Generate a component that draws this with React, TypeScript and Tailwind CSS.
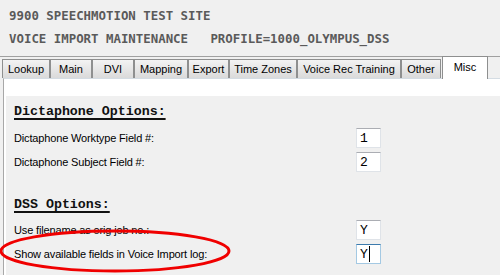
import React from "react";

const tabs = [
  { label: "Lookup", w: 48 },
  { label: "Main", w: 42 },
  { label: "DVI", w: 42 },
  { label: "Mapping", w: 54 },
  { label: "Export", w: 41 },
  { label: "Time Zones", w: 68 },
  { label: "Voice Rec Training", w: 104 },
  { label: "Other", w: 40 },
];

function Field({ value, focused }: { value: string; focused?: boolean }) {
  return (
    <div
      className={
        focused
          ? "w-[25px] h-[20px] bg-white border border-[#a4c9e3] border-t-[#3d7bad] flex items-center pl-[3px]"
          : "w-[25px] h-[20px] bg-white border border-[#dfe3e8] border-t-[#abadb3] flex items-center pl-[3px]"
      }
      style={{ fontFamily: '"Liberation Mono", "Courier New", monospace' }}
    >
      <span className="text-[13px] leading-[13px] text-black">{value}</span>
      {focused && <span className="w-px h-[16px] bg-black ml-[1px]" />}
    </div>
  );
}

function Row({ label, value, focused }: { label: string; value: string; focused?: boolean }) {
  return (
    <div className="flex items-center h-[20px]">
      <div className="w-[342px] text-[11px] tracking-[-0.15px] text-black leading-[14px]">{label}</div>
      <Field value={value} focused={focused} />
    </div>
  );
}

function Heading({ children }: { children: React.ReactNode }) {
  return (
    <div
      className="text-[13.3px] leading-[15px] font-bold text-[#111] underline underline-offset-[3px] decoration-[1.5px]"
      style={{ fontFamily: '"Liberation Mono", "Courier New", monospace' }}
    >
      {children}
    </div>
  );
}

export default function App() {
  return (
    <div
      className="relative w-[500px] h-[275px] bg-[#f0f0f0] overflow-hidden flex flex-col"
      style={{ fontFamily: '"Liberation Sans", Arial, sans-serif' }}
    >
      <div
        className="h-[56px] pt-[4px] pl-[9px] font-bold text-[12.4px] leading-[23px] text-[#5a5a5a] whitespace-pre"
        style={{ fontFamily: '"DejaVu Sans Mono", monospace' }}
      >
        <div>9900 SPEECHMOTION TEST SITE</div>
        <div>VOICE IMPORT MAINTENANCE   PROFILE=1000_OLYMPUS_DSS</div>
      </div>
      <div className="h-[22px] border-t border-[#a0a0a0] flex items-end pl-[2px]">
        {tabs.map((t) => (
          <div
            key={t.label}
            className="h-[19px] border border-b-0 border-[#8e8f8f] bg-gradient-to-b from-[#f3f3f3] to-[#dadada] flex items-center justify-center text-[11px] text-black"
            style={{ width: t.w }}
          >
            {t.label}
          </div>
        ))}
        <div className="ml-[1px] w-[46px] h-[23px] -mt-px -mb-px relative z-10 bg-white border border-b-0 border-[#8e8f8f] flex items-start justify-center pt-[4px] text-[11px] leading-[13px] text-black self-end">
          Misc
        </div>
      </div>
      <div className="flex-1 ml-[3px] bg-white border-t border-l border-t-[#d4dce3] border-l-[#a8a8a8] pt-[17px] pl-[2px]">
        <div className="h-full bg-[#f0f0f0] pl-[8px] pt-[8px]">
          <Heading>Dictaphone Options:</Heading>
          <div className="mt-[9px]">
            <Row label="Dictaphone Worktype Field #:" value="1" />
          </div>
          <div className="mt-[4px]">
            <Row label="Dictaphone Subject Field #:" value="2" />
          </div>
          <div className="mt-[25px]">
            <Heading>DSS Options:</Heading>
          </div>
          <div className="mt-[8px]">
            <Row label="Use filename as orig job no.:" value="Y" />
          </div>
          <div className="mt-[4px]">
            <Row label="Show available fields in Voice Import log:" value="Y" focused />
          </div>
        </div>
      </div>
      <svg className="absolute left-0 top-0 pointer-events-none" width="500" height="275">
        <ellipse cx="115" cy="251" rx="114" ry="20" fill="none" stroke="#f00000" strokeWidth="3" />
      </svg>
    </div>
  );
}
